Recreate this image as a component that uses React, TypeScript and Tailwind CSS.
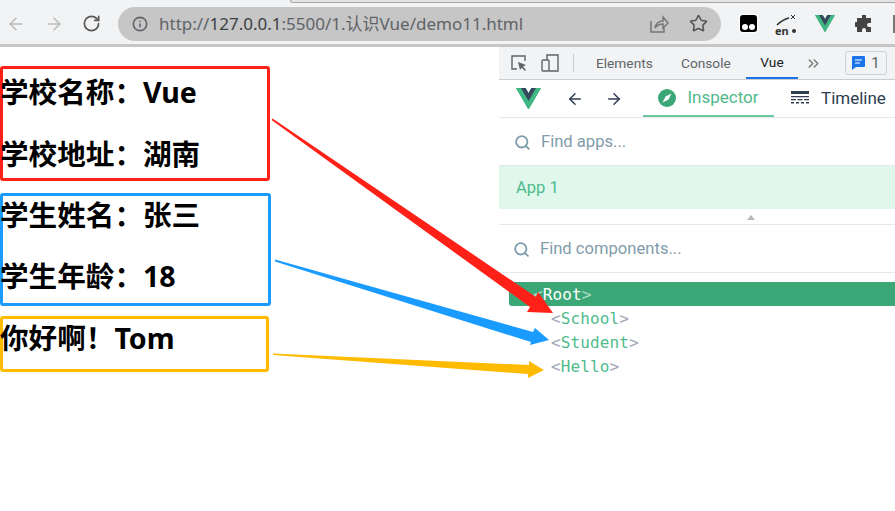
import { ArrowLeft, ArrowRight, ChevronsRight, Info, RotateCw, Search, Star } from "lucide-react";

const VueLogo = ({ size }: { size: number }) => (
    <svg width={size} height={size * 0.87} viewBox="0 0 256 221">
        <path fill="#41B883" d="M204.8 0H256L128 220.8 0 0h97.92L128 51.2 157.44 0h47.36Z" />
        <path fill="#41B883" d="m0 0 128 220.8L256 0h-51.2L128 132.48 50.56 0H0Z" />
        <path fill="#35495E" d="M50.56 0 128 133.12 204.8 0h-47.36L128 51.2 97.92 0H50.56Z" />
    </svg>
);

const SearchRow = ({ label, ml }: { label: string; ml: string }) => (
    <div className={`flex h-full items-center gap-[10px] ${ml} text-[16.6px] text-[#7f9cab]`}>
        <Search size={17} strokeWidth={2.6} className="text-[#7f9cab]" />
        <span>{label}</span>
    </div>
);

const TreeRow = ({ name }: { name: string }) => (
    <div className="h-6 pl-[52px] font-['DejaVu_Sans_Mono',monospace] text-[16px] leading-[26px] tracking-[0.12px] text-[#4fbb8d]">
        <span className="text-[#a5a9b8]">&lt;</span>
        {name}
        <span className="text-[#a5a9b8]">&gt;</span>
    </div>
);

type CardProps = {
    box: string;
    row: string;
    lines: string[];
};

const Card = ({ box, row, lines }: CardProps) => (
    <div className={`flex flex-col rounded-[3px] border-[3px] ${box}`}>
        {lines.map((line) => (
            <p key={line} className={`shrink-0 -ml-[3px] text-[28.6px] leading-[38px] font-bold whitespace-nowrap text-black ${row}`}>
                {line}
            </p>
        ))}
    </div>
);

const Toolbar = () => (
    <div className="flex h-[47px] flex-col overflow-hidden border-b-[3px] border-[#c6c6c6] bg-[#f1f3f4]">
        <div className="ml-[290px] h-[3px] shrink-0 rounded-bl-[3px] border-b border-l border-[#a8a8a8] bg-[#e4e4e4]" />
        <div className="flex flex-1 items-center">
            <div className="flex w-[118px] shrink-0 items-center pl-[6px] text-[#b9b9b9]">
                <ArrowLeft size={20} strokeWidth={1.8} />
                <ArrowRight size={20} strokeWidth={1.8} className="ml-[18px]" />
                <RotateCw size={19} strokeWidth={2.2} className="ml-[18px] text-[#5b5b5b]" />
            </div>
            <div className="flex h-[34px] w-[603px] shrink-0 items-center rounded-full bg-[#c6c6c6] pl-[14px] pr-[13px] text-[#5f6368]">
                <Info size={16} strokeWidth={2.4} />
                <span className="ml-[11px] text-[17px] whitespace-nowrap">
                    http://<span className="text-[#3c4043]">127.0.0.1</span>:5500/1.认识Vue/demo11.html
                </span>
                <svg width="20" height="20" viewBox="0 0 20 20" fill="none" stroke="#777" strokeWidth="1.5" className="ml-auto">
                    <path d="M2 7v11h13v-4" />
                    <path d="M6 14c1-5 4-7 8-7V3l5 6-5 5v-4c-3 0-6 1-8 4Z" />
                </svg>
                <Star size={19} strokeWidth={2} className="ml-[20px] text-[#555]" />
            </div>
            <div className="flex shrink-0 items-center pl-[18px]">
                <svg width="19" height="19" viewBox="0 0 19 19">
                    <rect width="19" height="19" rx="4" fill="#fff" />
                    <rect x="1" y="1" width="17" height="17" rx="3" fill="#000" />
                    <circle cx="6" cy="13" r="3" fill="#fff" />
                    <circle cx="13" cy="13" r="3" fill="#fff" />
                </svg>
                <div className="relative ml-[17px] h-[20px] w-[22px]">
                    <svg width="22" height="14" viewBox="0 0 22 14" fill="none" stroke="#333" strokeWidth="1.6">
                        <path d="M2 11c3-3 8-6 12-7" />
                        <path d="M16 1l4 4M20 1l-4 4" strokeWidth="1" />
                    </svg>
                    <span className="absolute bottom-[-2px] left-0 text-[11px] leading-none font-bold text-[#333]">en</span>
                    <span className="absolute right-[1px] bottom-[1px] h-[4px] w-[4px] rounded-full bg-[#333]" />
                </div>
                <div className="ml-[18px]">
                    <VueLogo size={20} />
                </div>
                <svg width="18" height="18" viewBox="0 0 18 18" className="ml-[20px]" fill="#444">
                    <path d="M7 1a2 2 0 0 1 4 0v2h5v5h-2a2 2 0 0 0 0 4h2v5h-5v-2a2 2 0 0 0-4 0v2H2v-5H1a2.500 2.500 0 0 1 0-5h1V3h5V1Z" />
                </svg>
                <div className="ml-[20px] h-[18px] w-[6px] shrink-0 border-2 border-r-0 border-[#777]" />
            </div>
        </div>
    </div>
);

const DevtoolsTabs = () => (
    <div className="flex h-[33px] items-center border-b border-[#cbcdd1] bg-[#f1f3f4] pl-[11px] text-[13.7px] text-[#5f6368]">
        <svg width="18" height="18" viewBox="0 0 18 18" fill="none" stroke="#5f6368" strokeWidth="1.4">
            <path d="M7 15H2V2h13v5" />
            <path d="M8 8l8 3-3 1.500L16 16l-1 1-3.200-3.200L10 16Z" fill="#5f6368" stroke="none" />
        </svg>
        <svg width="18" height="18" viewBox="0 0 18 18" fill="none" stroke="#5f6368" strokeWidth="1.4" className="ml-[13px]">
            <path d="M6 6V1h11v16H8" />
            <rect x="1" y="6" width="7" height="11" rx="1" />
        </svg>
        <div className="ml-[14px] h-[18px] w-px bg-[#c8cacd]" />
        <span className="ml-[22px] w-[57px]">Elements</span>
        <span className="ml-[28px] w-[50px]">Console</span>
        <div className="ml-[15px] flex h-full w-[52px] items-center justify-center border-b-2 border-[#1a73e8] text-[#202124]">Vue</div>
        <ChevronsRight size={17} strokeWidth={2} className="ml-[7px] text-[#777]" />
        <div className="ml-[23px] flex h-[24px] w-[42px] items-center justify-center gap-[6px] rounded-[3px] border border-[#d0d3d6] text-[15px]">
            <svg width="13" height="14" viewBox="0 0 13 14">
                <path fill="#1a73e8" d="M1 0h11a1 1 0 0 1 1 1v9a1 1 0 0 1-1 1H4l-4 3V1a1 1 0 0 1 1-1Z" />
                <path stroke="#fff" strokeWidth="1.2" d="M3 4h7M3 7h5" />
            </svg>
            <span>1</span>
        </div>
    </div>
);

const VueBar = () => (
    <div className="flex h-[38px] items-center border-b border-[#e5e7eb] text-[17px]">
        <div className="ml-[17px]">
            <VueLogo size={25} />
        </div>
        <ArrowLeft size={18} strokeWidth={2} className="ml-[25px] text-[#2c3e50]" />
        <ArrowRight size={18} strokeWidth={2} className="ml-[21px] text-[#2c3e50]" />
        <div className="ml-[20px] flex h-full w-[131px] items-center justify-center gap-[11px] border-b-2 border-[#6cc79e] text-[#4fb98a]">
            <svg width="18" height="18" viewBox="0 0 18 18">
                <circle cx="9" cy="9" r="9" fill="#3ba776" />
                <path fill="#fff" d="M13.500 4.500 10.500 10.500 4.500 13.500 7.500 7.500Z" />
            </svg>
            <span>Inspector</span>
        </div>
        <div className="ml-[17px] flex items-center gap-[12px] text-[#2c3e50]">
            <svg width="18" height="15" viewBox="0 0 18 15" fill="#2c3e50">
                <path d="M0 0h18v3H0zM0 5h18v1.200H0zM0 8h5v1.200H0zM6.500 8h5v1.200H6.500zM13 8h5v1.200h-5zM0 11h3v1.500H0zM5 11h3v1.500H5zM10 11h3v1.500h-3zM15 11h3v1.500h-3z" />
            </svg>
            <span className="whitespace-nowrap">Timeline</span>
        </div>
    </div>
);

const Devtools = () => (
    <div className="w-[396px] shrink-0 overflow-hidden font-['Roboto',sans-serif]">
        <DevtoolsTabs />
        <VueBar />
        <div className="h-[48px] border-b border-[#e5e7eb] pt-[2px]">
            <SearchRow label="Find apps..." ml="ml-[15px]" />
        </div>
        <div className="flex h-[43px] items-center bg-[#e0f7ec] pt-[1px] pl-[17px] text-[16.5px] text-[#4fbb8d]">App 1</div>
        <div className="h-[16px] border-b border-[#e5e7eb] pt-[6px] pl-[248px]">
            <div className="h-0 w-0 border-x-[4px] border-b-[5px] border-x-transparent border-b-[#b4b9c0]" />
        </div>
        <div className="h-[48px] border-b border-[#e5e7eb] pt-[1px]">
            <SearchRow label="Find components..." ml="ml-[14px]" />
        </div>
        <div className="pt-[9px]">
            <div className="ml-[10px] h-6 rounded-l-[3px] bg-[#3ba776] pl-[24px] font-['DejaVu_Sans_Mono',monospace] text-[16px] leading-[26px] tracking-[0.12px] text-white">
                <span className="text-[#a9dcc3]">&lt;</span>
                Root
                <span className="text-[#a9dcc3]">&gt;</span>
            </div>
            <TreeRow name="School" />
            <TreeRow name="Student" />
            <TreeRow name="Hello" />
        </div>
    </div>
);

const Arrows = () => (
    <svg width="895" height="511" className="pointer-events-none absolute top-0 left-0">
        <polygon fill="#ff2018" points="272.500,118.500 536,297 538,292 553,313 527,312 530,307 271.500,120" />
        <polygon fill="#1a9bff" points="275,259.500 533,332 535,328 549,340 530,345 531,342 275,261.500" />
        <polygon fill="#ffbb00" points="273,353.500 529,365 529,361 544,370 528,378 528,374 273,355" />
    </svg>
);

export default function App() {
    return (
        <div className="relative h-[511px] w-[895px] overflow-hidden bg-white font-['Noto_Sans','Noto_Sans_CJK_SC',sans-serif]">
            <Toolbar />
            <div className="flex">
                <div className="flex w-[499px] shrink-0 flex-col pt-[19px]">
                    <Card box="h-[115px] w-[270px] border-[#ff2018]" row="h-[62px] pt-[4px]" lines={["学校名称：Vue", "学校地址：湖南"]} />
                    <div className="mt-[12px]">
                        <Card box="h-[113px] w-[271px] border-[#1a9bff]" row="h-[61px]" lines={["学生姓名：张三", "学生年龄：18"]} />
                    </div>
                    <div className="mt-[10px]">
                        <Card box="h-[56px] w-[269px] border-[#ffbb00]" row="h-[50px]" lines={["你好啊！Tom"]} />
                    </div>
                </div>
                <Devtools />
            </div>
            <Arrows />
        </div>
    );
}
